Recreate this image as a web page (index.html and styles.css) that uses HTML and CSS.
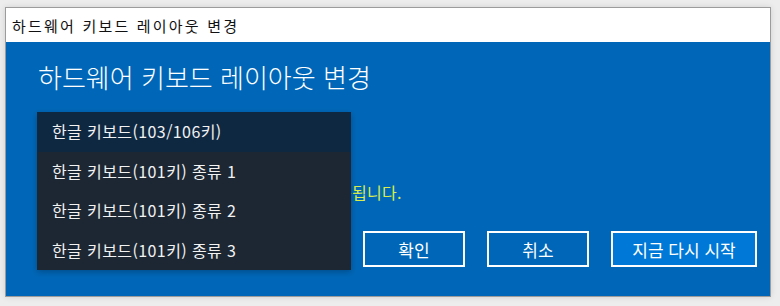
FILE: index.html
```html
<!DOCTYPE html>
<html lang="ko">
<head>
  <meta charset="UTF-8">
  <title>하드웨어 키보드 레이아웃 변경</title>
  <link rel="stylesheet" href="styles.css">
</head>
<body>
  <div class="window">
    <div class="titlebar">하드웨어 키보드 레이아웃 변경</div>
    <div class="content">
      <h1>하드웨어 키보드 레이아웃 변경</h1>
      <p class="notice">변경 내용은 컴퓨터를 다시 시작한 후에야 적용됩니다.</p>
      <div class="buttons">
        <button class="btn">확인</button>
        <button class="btn">취소</button>
        <button class="btn btn-primary">지금 다시 시작</button>
      </div>

      <ul class="dropdown">
        <li class="selected">한글 키보드(103/106키)</li>
        <li>한글 키보드(101키) 종류 1</li>
        <li>한글 키보드(101키) 종류 2</li>
        <li>한글 키보드(101키) 종류 3</li>
      </ul>
    </div>
  </div>
</body>
</html>
```

FILE: styles.css
```css
body {
  font-family: 'Noto Sans CJK KR', 'Noto Sans', sans-serif;
  background-color: #ededed;
  margin: 0;
  padding: 7px 9px 9px 5px;
}

.window {
  border: 1px solid #9c9c9c;
  box-shadow: 0 0 6px rgba(0,0,0,0.12);
}

.titlebar {
  background-color: #fff;
  color: #111;
  font-size: 15px;
  letter-spacing: 2.2px;
  height: 34px;
  line-height: 36px;
  padding-left: 6px;
}

.content {
  position: relative;
  background-color: #0067b8;
  color: #fff;
  height: 254px;
  box-sizing: border-box;
  padding: 18px 13px 0 32px;
}

h1 {
  font-size: 26px;
  font-weight: 300;
  line-height: 34px;
  margin: 0;
}

.notice {
  color: #dcec4a;
  font-size: 16px;
  letter-spacing: 0.3px;
  line-height: 20px;
  white-space: nowrap;
  margin: 88px 0 0 0;
}

.buttons {
  display: flex;
  justify-content: flex-end;
  gap: 22px;
  margin-top: 29px;
}

.btn {
  font-family: inherit;
  font-size: 17px;
  color: #fff;
  background-color: #0067b8;
  border: 2px solid #fff;
  width: 102px;
  height: 36px;
  padding: 0;
}

.btn-primary {
  background-color: #0078d7;
  width: 146px;
}

/* open list of the layout combobox, lies over the dialog */
.dropdown {
  position: absolute;
  left: 31px;
  top: 70px;
  width: 314px;
  margin: 0;
  padding: 0;
  list-style: none;
  background-color: #1c2733;
  box-shadow: 0 2px 6px rgba(0,0,0,0.25);
}

.dropdown li {
  font-size: 16px;
  letter-spacing: 0.4px;
  height: 39.5px;
  line-height: 39px;
  padding-left: 15px;
  color: #f2f2f2;
}

.dropdown li.selected {
  background-color: #0f2842;
}
```
